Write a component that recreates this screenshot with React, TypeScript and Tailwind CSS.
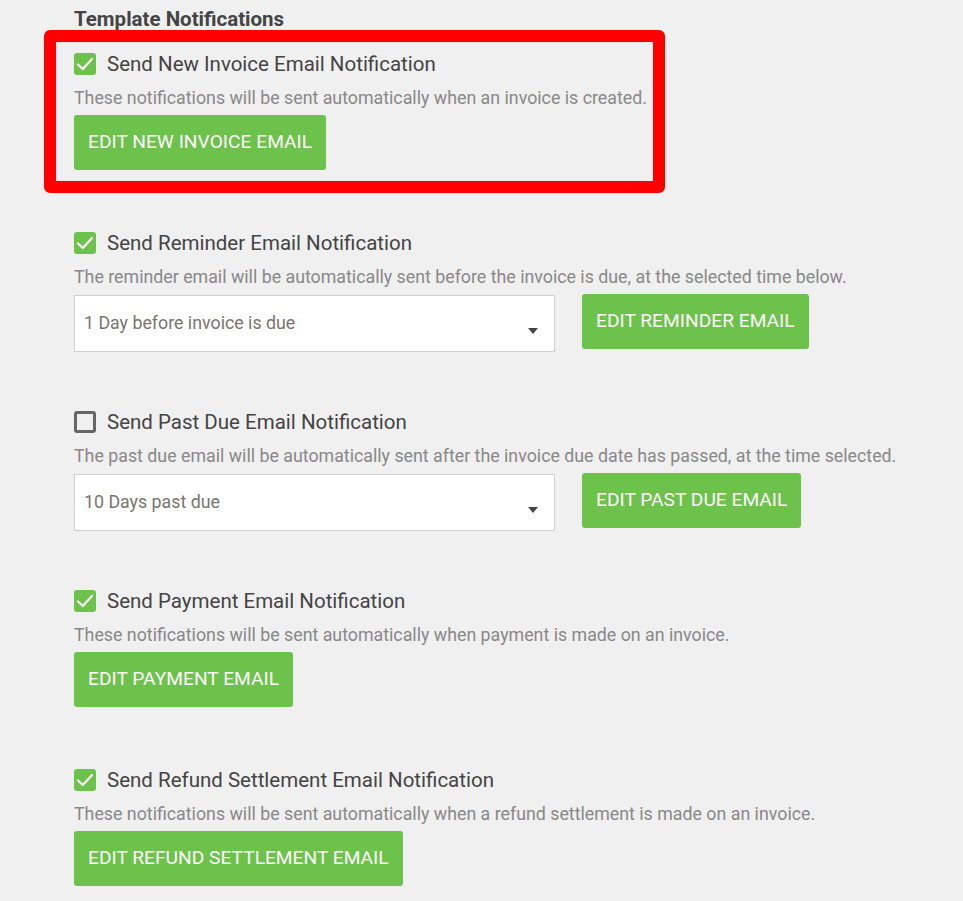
import React from "react";

const font = { fontFamily: "Roboto, 'Liberation Sans', sans-serif" };

function Check({ checked }: { checked: boolean }) {
  if (checked) {
    return (
      <span className="flex h-[22px] w-[22px] shrink-0 items-center justify-center rounded-[3px] bg-[#6cc24a]">
        <svg width="22" height="22" viewBox="0 0 22 22" fill="none">
          <path d="M4 11.5 L8.8 16 L18 6" stroke="white" strokeWidth="2.2" strokeLinecap="round" strokeLinejoin="round" />
        </svg>
      </span>
    );
  }
  return <span className="h-[22px] w-[22px] shrink-0 rounded-[3px] border-[3px] border-[#666]" />;
}

function Label({ checked, text }: { checked: boolean; text: string }) {
  return (
    <div className="flex h-[24px] items-center gap-[11px]">
      <Check checked={checked} />
      <span className="text-[20.5px] leading-[24px] text-[#444]">{text}</span>
    </div>
  );
}

function Desc({ text }: { text: string }) {
  return <div className="mt-[10px] whitespace-nowrap text-[17.8px] leading-[24px] text-[#888]">{text}</div>;
}

function Btn({ text }: { text: string }) {
  return (
    <button className="flex h-[55px] shrink-0 items-center rounded-[3px] bg-[#6cc24a] px-[14px] text-[19.2px] text-white">
      {text}
    </button>
  );
}

function Select({ value }: { value: string }) {
  return (
    <div className="relative mt-[1px] flex h-[57px] w-[481px] shrink-0 items-center border border-[#d0d0d0] bg-white pl-[9px] pb-[1px]">
      <span className="text-[17.8px] text-[#7a7570]">{value}</span>
      <span className="absolute right-[16px] top-[32px] h-0 w-0 border-x-[5px] border-t-[6px] border-x-transparent border-t-[#444]" />
    </div>
  );
}

export default function App() {
  return (
    <div className="min-h-[901px] w-full bg-[#f0f0f0]" style={font}>
      <div className="pl-[74px] pt-[8px]">
        <h2 className="text-[20.5px] font-bold leading-[22px] text-[#444]">Template Notifications</h2>
      </div>

      <div className="ml-[44px] w-[621px] rounded-[6px] border-[12px] border-[#ff0000] pb-[11px] pl-[18px] pt-[10px] shadow-[inset_0_0_1px_rgba(0,0,0,0.3)]">
        <Label checked text="Send New Invoice Email Notification" />
        <Desc text="These notifications will be sent automatically when an invoice is created." />
        <div className="mt-[5px] flex">
          <Btn text="EDIT NEW INVOICE EMAIL" />
        </div>
      </div>

      <div className="flex flex-col pl-[74px] pt-[38px]">
        <div className="h-[179px]">
          <Label checked text="Send Reminder Email Notification" />
          <Desc text="The reminder email will be automatically sent before the invoice is due, at the selected time below." />
          <div className="mt-[5px] flex items-start gap-[27px]">
            <Select value="1 Day before invoice is due" />
            <Btn text="EDIT REMINDER EMAIL" />
          </div>
        </div>
        <div className="h-[179px]">
          <Label checked={false} text="Send Past Due Email Notification" />
          <Desc text="The past due email will be automatically sent after the invoice due date has passed, at the time selected." />
          <div className="mt-[5px] flex items-start gap-[27px]">
            <Select value="10 Days past due" />
            <Btn text="EDIT PAST DUE EMAIL" />
          </div>
        </div>
        <div className="h-[179px]">
          <Label checked text="Send Payment Email Notification" />
          <Desc text="These notifications will be sent automatically when payment is made on an invoice." />
          <div className="mt-[5px] flex">
            <Btn text="EDIT PAYMENT EMAIL" />
          </div>
        </div>
        <div>
          <Label checked text="Send Refund Settlement Email Notification" />
          <Desc text="These notifications will be sent automatically when a refund settlement is made on an invoice." />
          <div className="mt-[5px] flex">
            <Btn text="EDIT REFUND SETTLEMENT EMAIL" />
          </div>
        </div>
      </div>
    </div>
  );
}
